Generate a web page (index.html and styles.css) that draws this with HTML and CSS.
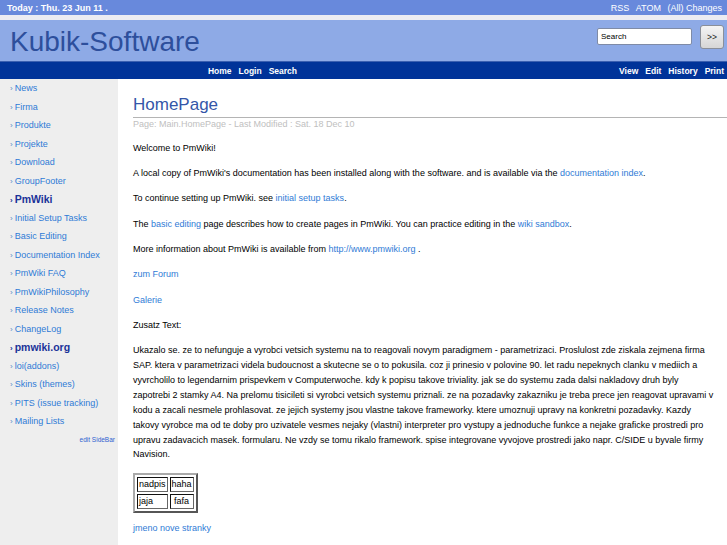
FILE: index.html
```html
<!DOCTYPE html>
<html>
<head>
<meta charset="utf-8">
<title>Kubik-Software</title>
<link rel="stylesheet" href="styles.css">
</head>
<body>
<div class="topbar">
  <span class="today">Today : Thu. 23 Jun 11 .</span>
  <span class="feeds"><a>RSS</a> <a>ATOM</a> <a>(All) Changes</a></span>
</div>
<div class="stripe"></div>
<div class="header">
  <div class="sitetitle">Kubik-Software</div>
  <form class="searchform">
    <input class="searchbox" type="text" value="Search">
    <button class="searchbtn" type="button">&gt;&gt;</button>
  </form>
</div>
<div class="navbar">
  <div class="navleft"><a>Home</a><a>Login</a><a>Search</a></div>
  <div class="navright"><a>View</a><a>Edit</a><a>History</a><a>Print</a></div>
</div>
<div class="layout">
  <div class="sidebar">
    <ul class="sidelist">
      <li><a>News</a></li>
      <li><a>Firma</a></li>
      <li><a>Produkte</a></li>
      <li><a>Projekte</a></li>
      <li><a>Download</a></li>
      <li><a>GroupFooter</a></li>
      <li class="head"><a>PmWiki</a></li>
      <li><a>Initial Setup Tasks</a></li>
      <li><a>Basic Editing</a></li>
      <li><a>Documentation Index</a></li>
      <li><a>PmWiki FAQ</a></li>
      <li><a>PmWikiPhilosophy</a></li>
      <li><a>Release Notes</a></li>
      <li><a>ChangeLog</a></li>
      <li class="head"><a>pmwiki.org</a></li>
      <li><a>loi(addons)</a></li>
      <li><a>Skins (themes)</a></li>
      <li><a>PITS (issue tracking)</a></li>
      <li><a>Mailing Lists</a></li>
    </ul>
    <div class="editside"><a>edit SideBar</a></div>
  </div>
  <div class="main">
    <h1 class="pagetitle">HomePage</h1>
    <div class="meta">Page: Main.HomePage - Last Modified : Sat. 18 Dec 10</div>
    <p>Welcome to PmWiki!</p>
    <p>A local copy of PmWiki's documentation has been installed along with the software. and is available via the <a>documentation index</a>.</p>
    <p>To continue setting up PmWiki. see <a>initial setup tasks</a>.</p>
    <p>The <a>basic editing</a> page describes how to create pages in PmWiki. You can practice editing in the <a>wiki sandbox</a>.</p>
    <p>More information about PmWiki is available from <a>http://www.pmwiki.org</a> .</p>
    <p><a>zum Forum</a></p>
    <p><a>Galerie</a></p>
    <p>Zusatz Text:</p>
    <p>Ukazalo se. ze to nefunguje a vyrobci vetsich systemu na to reagovali novym paradigmem - parametrizaci. Proslulost zde ziskala zejmena firma SAP. ktera v parametrizaci videla budoucnost a skutecne se o to pokusila. coz ji prinesio v polovine 90. let radu nepeknych clanku v mediich a vyvrcholilo to legendarnim prispevkem v Computerwoche. kdy k popisu takove triviality. jak se do systemu zada dalsi nakladovy druh byly zapotrebi 2 stamky A4. Na prelomu tisicileti si vyrobci vetsich systemu priznali. ze na pozadavky zakazniku je treba prece jen reagovat upravami v kodu a zacali nesmele prohlasovat. ze jejich systemy jsou vlastne takove frameworky. ktere umoznuji upravy na konkretni pozadavky. Kazdy takovy vyrobce ma od te doby pro uzivatele vesmes nejaky (vlastni) interpreter pro vystupy a jednoduche funkce a nejake graficke prostredi pro upravu zadavacich masek. formularu. Ne vzdy se tomu rikalo framework. spise integrovane vyvojove prostredi jako napr. C/SIDE u byvale firmy Navision.</p>
    <table class="datatable" border="1">
      <tr><td>nadpis</td><td>haha</td></tr>
      <tr><td>jaja</td><td class="center">fafa</td></tr>
    </table>
    <p><a>jmeno nove stranky</a></p>
  </div>
</div>
</body>
</html>
```

FILE: styles.css
```css
html, body {
  margin: 0;
  padding: 0;
  background: #ffffff;
  font-family: "Liberation Sans", Arial, sans-serif;
  color: #000;
}

a {
  color: #2f7bd6;
  text-decoration: none;
}

.topbar {
  height: 15px;
  background: #6889dc;
  display: flex;
  justify-content: space-between;
  align-items: center;
  padding: 0 5px 0 7px;
  font-size: 9px;
  color: #ffffff;
}

.today {
  font-weight: bold;
}

.feeds a {
  color: #ffffff;
  margin-left: 4px;
}

.stripe {
  height: 5px;
  background: #ececf2;
}

.header {
  height: 41px;
  box-sizing: border-box;
  background: #8eaae6;
  display: flex;
  align-items: flex-start;
  justify-content: space-between;
  padding: 0 3px 0 10px;
}

.sitetitle {
  font-size: 28px;
  color: #2d4f9c;
  line-height: 32px;
  margin-top: 6px;
}

.searchform {
  display: flex;
  align-items: center;
  gap: 8px;
  margin: 5px 0 0 0;
}

.searchbox {
  width: 95px;
  height: 17px;
  box-sizing: border-box;
  border: 1px solid #7f8ba6;
  border-radius: 2px;
  background: #fff;
  font-family: "Liberation Sans", Arial, sans-serif;
  font-size: 8px;
  padding: 0 3px;
  color: #000;
  margin-top: -2px;
}

.searchbtn {
  width: 24px;
  height: 24px;
  box-sizing: border-box;
  border: 1px solid #8a8f99;
  border-radius: 3px;
  background: linear-gradient(#f4f4f4, #d6d6d6);
  font-family: "Liberation Sans", Arial, sans-serif;
  font-size: 8.5px;
  color: #222;
  padding: 0;
}

.navbar {
  height: 18px;
  background: #003399;
  border-top: 1px solid #3a5fb0;
  box-sizing: border-box;
  display: flex;
  align-items: center;
  justify-content: space-between;
  padding-right: 3px;
  font-size: 8.5px;
  font-weight: bold;
}

.navbar a {
  color: #ffffff;
}

.navleft {
  width: 297px;
  display: flex;
  justify-content: flex-end;
  gap: 7px;
}

.navright {
  display: flex;
  gap: 7px;
}

.layout {
  display: flex;
  align-items: stretch;
  min-height: 466px;
}

.sidebar {
  width: 118px;
  flex: none;
  background: #eeeeee;
  padding-bottom: 20px;
}

.sidelist {
  list-style: none;
  margin: 0;
  padding: 0 0 0 10px;
}

.sidelist li {
  height: 18.5px;
  line-height: 18.5px;
  font-size: 9px;
  white-space: nowrap;
}

.sidelist li::before {
  content: "\203A";
  color: #5a88c8;
  margin-right: 2px;
  font-size: 8px;
}

.sidelist li.head {
  font-size: 10.5px;
  font-weight: bold;
}

.sidelist li.head a {
  color: #1a3299;
}

.sidelist li.head::before {
  color: #1a3299;
  font-weight: bold;
}

.editside {
  text-align: right;
  padding-right: 3px;
  font-size: 6.5px;
  line-height: 18px;
}

.editside a {
  color: #2f5fd0;
}

.main {
  flex: 1;
  padding: 14px 0 0 15px;
  font-size: 9px;
  line-height: 14.86px;
  min-width: 0;
}

.pagetitle {
  margin: 0;
  font-size: 17px;
  font-weight: normal;
  line-height: 24px;
  color: #3456a8;
  border-bottom: 1px solid #b4b4b4;
}

.meta {
  font-size: 9px;
  line-height: 12px;
  color: #c0c0c0;
}

.main p {
  margin: 10.5px 10px 10.5px 0;
}

.datatable {
  border: 2px outset #aaa;
  border-spacing: 2px;
  font-size: 9px;
  line-height: 11px;
  margin-top: 9px;
  margin-bottom: -2px;
}

.datatable td {
  border: 1px inset #666;
  padding: 1px 1px;
}

.datatable td.center {
  text-align: center;
}
```
